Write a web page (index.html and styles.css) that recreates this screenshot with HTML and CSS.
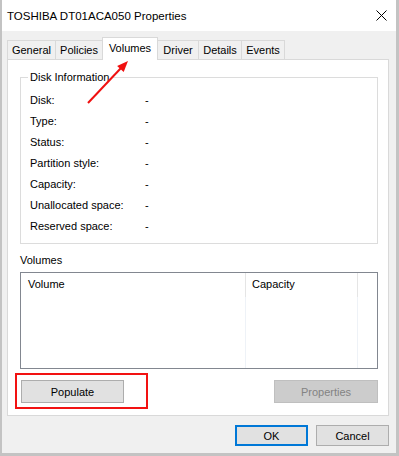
FILE: index.html
```html
<!DOCTYPE html>
<html lang="en">
<head>
  <meta charset="UTF-8">
  <title>TOSHIBA DT01ACA050 Properties</title>
  <link rel="stylesheet" href="styles.css">
</head>
<body>
  <div class="window">
    <div class="titlebar">
      <span class="title">TOSHIBA DT01ACA050 Properties</span>
      <svg class="close" width="11" height="11" viewBox="0 0 11 11">
        <path d="M0.5 0.5 L10.5 10.5 M10.5 0.5 L0.5 10.5" stroke="#000" stroke-width="1" fill="none"/>
      </svg>
    </div>

    <div class="client">
      <div class="tabs">
        <div class="tab tab-general">General</div>
        <div class="tab tab-policies">Policies</div>
        <div class="tab tab-volumes active">Volumes</div>
        <div class="tab tab-driver">Driver</div>
        <div class="tab tab-details">Details</div>
        <div class="tab tab-events">Events</div>
      </div>

      <div class="panel">
        <div class="group">
          <div class="group-title">Disk Information</div>
          <div class="row"><span class="key">Disk:</span><span>-</span></div>
          <div class="row"><span class="key">Type:</span><span>-</span></div>
          <div class="row"><span class="key">Status:</span><span>-</span></div>
          <div class="row"><span class="key">Partition style:</span><span>-</span></div>
          <div class="row"><span class="key">Capacity:</span><span>-</span></div>
          <div class="row"><span class="key">Unallocated space:</span><span>-</span></div>
          <div class="row"><span class="key">Reserved space:</span><span>-</span></div>
        </div>

        <div class="list-label">Volumes</div>
        <div class="list">
          <div class="list-head">
            <div class="col">Volume</div>
            <div class="col">Capacity</div>
            <div class="col"></div>
          </div>
          <div class="list-body">
            <div class="col"></div>
            <div class="col"></div>
            <div class="col"></div>
          </div>
        </div>

        <div class="actions">
          <button class="btn btn-populate">Populate</button>
          <button class="btn btn-properties" disabled>Properties</button>
        </div>
      </div>

      <div class="footer">
        <button class="btn btn-ok">OK</button>
        <button class="btn btn-cancel">Cancel</button>
      </div>
    </div>

    <div class="highlight"></div>
    <svg class="arrow" width="399" height="456" viewBox="0 0 399 456">
      <line x1="88" y1="103" x2="121" y2="68" stroke="#f01010" stroke-width="2"/>
      <polygon points="128,61 123.7,72.1 117.1,65.9" fill="#f01010"/>
    </svg>
  </div>
</body>
</html>
```

FILE: styles.css
```css
:root {
  --face: #f0f0f0;
  --tab-border: #d9d9d9;
  --group-border: #dcdcdc;
  --list-border: #828790;
  --btn-bg: #e1e1e1;
  --btn-border: #adadad;
  --accent: #0078d7;
}
body {
  margin: 0;
  background: #fff;
  font-family: "Liberation Sans", Arial, sans-serif;
  font-size: 11px;
  color: #000;
}
.window {
  position: relative;
  width: 399px;
  height: 456px;
  box-sizing: border-box;
  display: flex;
  flex-direction: column;
  border-style: solid;
  border-color: #c3c3c3;
  border-width: 0 3px 3px 2px;
  background: var(--face);
}
.titlebar {
  height: 31px;
  flex: none;
  background: #fff;
  display: flex;
  align-items: center;
  justify-content: space-between;
  padding: 0 9px 0 5px;
}
.title {
  font-size: 11.5px;
  margin-top: 1px;
}
.close {
  display: block;
}
.client {
  flex: 1;
  padding: 6px 7px 0 5px;
}
.tabs {
  display: flex;
  align-items: flex-end;
  height: 22px;
}
.tab {
  box-sizing: border-box;
  height: 19px;
  margin-right: -1px;
  border: 1px solid var(--tab-border);
  border-bottom: none;
  background: var(--face);
  display: flex;
  align-items: center;
  justify-content: center;
}
.tab.active {
  position: relative;
  z-index: 1;
  height: 23px;
  margin-bottom: -1px;
  background: #fff;
  padding-bottom: 2px;
}
.tab-general { width: 49px; }
.tab-policies { width: 48px; }
.tab-volumes { width: 56px; }
.tab-driver { width: 42px; }
.tab-details { width: 44px; }
.tab-events { width: 44px; margin-right: 0; }
.panel {
  background: #fff;
  border: 1px solid var(--tab-border);
  padding: 17px 10px 12px 12px;
}
.group {
  position: relative;
  border: 1px solid var(--group-border);
  padding: 12px 0 6px 9px;
}
.group-title {
  position: absolute;
  top: -7px;
  left: 7px;
  padding: 0 2px;
  line-height: 13px;
  background: #fff;
}
.row {
  display: flex;
  line-height: 21px;
}
.key {
  width: 115px;
}
.list-label {
  margin: 10px 0 5px;
  line-height: 13px;
}
.list {
  height: 97px;
  box-sizing: border-box;
  border: 1px solid var(--list-border);
  display: flex;
  flex-direction: column;
}
.list-head,
.list-body {
  display: grid;
  grid-template-columns: 225px 112px 1fr;
}
.list-head {
  height: 24px;
  line-height: 23px;
}
.list-head .col {
  border-right: 1px solid #e5e5e5;
  padding-left: 7px;
}
.list-head .col:nth-child(2) {
  padding-left: 6px;
}
.list-head .col:last-child,
.list-body .col:last-child {
  border-right: none;
}
.list-body {
  flex: 1;
}
.list-body .col {
  border-right: 1px solid #eef2f7;
}
.actions {
  display: flex;
  justify-content: space-between;
  margin-top: 11px;
  padding-left: 1px;
}
.btn {
  box-sizing: border-box;
  height: 23px;
  margin: 0;
  padding: 0;
  font-family: inherit;
  font-size: 11px;
  color: #000;
  background: var(--btn-bg);
  border: 1px solid var(--btn-border);
  border-radius: 0;
}
.btn-populate {
  width: 103px;
}
.btn-properties {
  width: 104px;
  background: #cccccc;
  border-color: #bfbfbf;
  color: #838383;
}
.footer {
  display: flex;
  justify-content: flex-end;
  gap: 8px;
  margin-top: 9px;
}
.btn-ok,
.btn-cancel {
  width: 73px;
  height: 21px;
}
.btn-ok {
  border: 2px solid var(--accent);
}
.highlight {
  position: absolute;
  left: 13px;
  top: 373px;
  width: 133px;
  height: 36px;
  box-sizing: border-box;
  border: 2px solid #f21212;
}
.arrow {
  position: absolute;
  left: -2px;
  top: 0;
  pointer-events: none;
}
```
